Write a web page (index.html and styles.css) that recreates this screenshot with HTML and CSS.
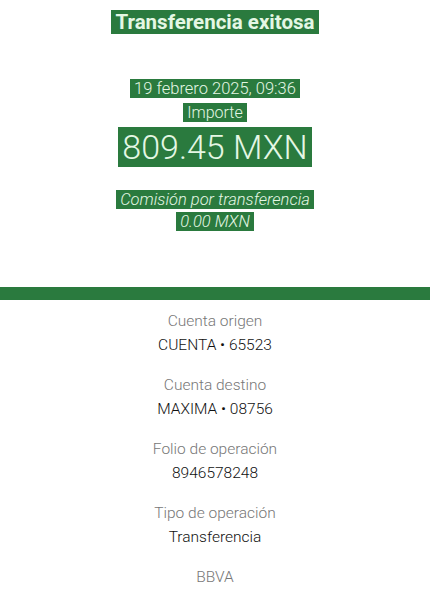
FILE: index.html
```html
<!DOCTYPE html>
<html lang="es">
<head>
    <meta charset="UTF-8">
    <meta name="viewport" content="width=device-width, initial-scale=1.0">
    <title>Transferencia exitosa</title>
    <link rel="stylesheet" href="styles.css">
</head>
<body>

    <header class="summary">
        <h1><span class="mark">Transferencia exitosa</span></h1>

        <p class="date"><span class="mark">19 febrero 2025, 09:36</span></p>
        <p class="label"><span class="mark">Importe</span></p>
        <p class="amount"><span class="mark">809.45 MXN</span></p>

        <p class="fee"><span class="mark">Comisión por transferencia</span></p>
        <p class="fee"><span class="mark">0.00 MXN</span></p>
    </header>

    <div class="bar"></div>

    <section class="details">
        <div class="item">
            <span class="item-label">Cuenta origen</span>
            <span class="item-value">CUENTA • 65523</span>
        </div>
        <div class="item">
            <span class="item-label">Cuenta destino</span>
            <span class="item-value">MAXIMA • 08756</span>
        </div>
        <div class="item">
            <span class="item-label">Folio de operación</span>
            <span class="item-value">8946578248</span>
        </div>
        <div class="item">
            <span class="item-label">Tipo de operación</span>
            <span class="item-value">Transferencia</span>
        </div>
        <div class="item">
            <span class="item-label">BBVA</span>
        </div>
    </section>

</body>
</html>
```

FILE: styles.css
```css
body {
    font-family: Roboto, 'Liberation Sans', sans-serif;
    margin: 0;
    background: #fff;
    color: #222;
    text-align: center;
}

p, h1 {
    margin: 0;
}

.mark {
    background-color: #2a7a3e;
    color: #e4f7e4;
    padding: 0 4px;
}

.summary {
    padding-top: 10px;
    height: 278px;
    box-sizing: border-box;
}

h1 {
    font-size: 20.5px;
    font-weight: 700;
    line-height: 24px;
}

.date {
    margin-top: 43px;
    font-size: 16.5px;
    font-weight: 300;
    line-height: 24px;
}

.label {
    font-size: 16px;
    font-weight: 300;
    line-height: 24px;
}

.amount {
    font-size: 34px;
    font-weight: 300;
    line-height: 40px;
    margin-top: 2px;
}

.fee {
    font-size: 16.5px;
    font-weight: 300;
    font-style: italic;
    line-height: 22px;
}

.amount + .fee {
    margin-top: 22px;
}

.bar {
    height: 13px;
    background-color: #2a7a3e;
    margin-top: 9px;
}

.details {
    display: flex;
    flex-direction: column;
    gap: 20px;
    padding-top: 11px;
}

.item {
    display: flex;
    flex-direction: column;
    gap: 4px;
    font-size: 15.5px;
    line-height: 20px;
}

.item-label {
    color: #777;
    font-weight: 300;
}

.item-value {
    color: #111;
    font-weight: 300;
}
```
